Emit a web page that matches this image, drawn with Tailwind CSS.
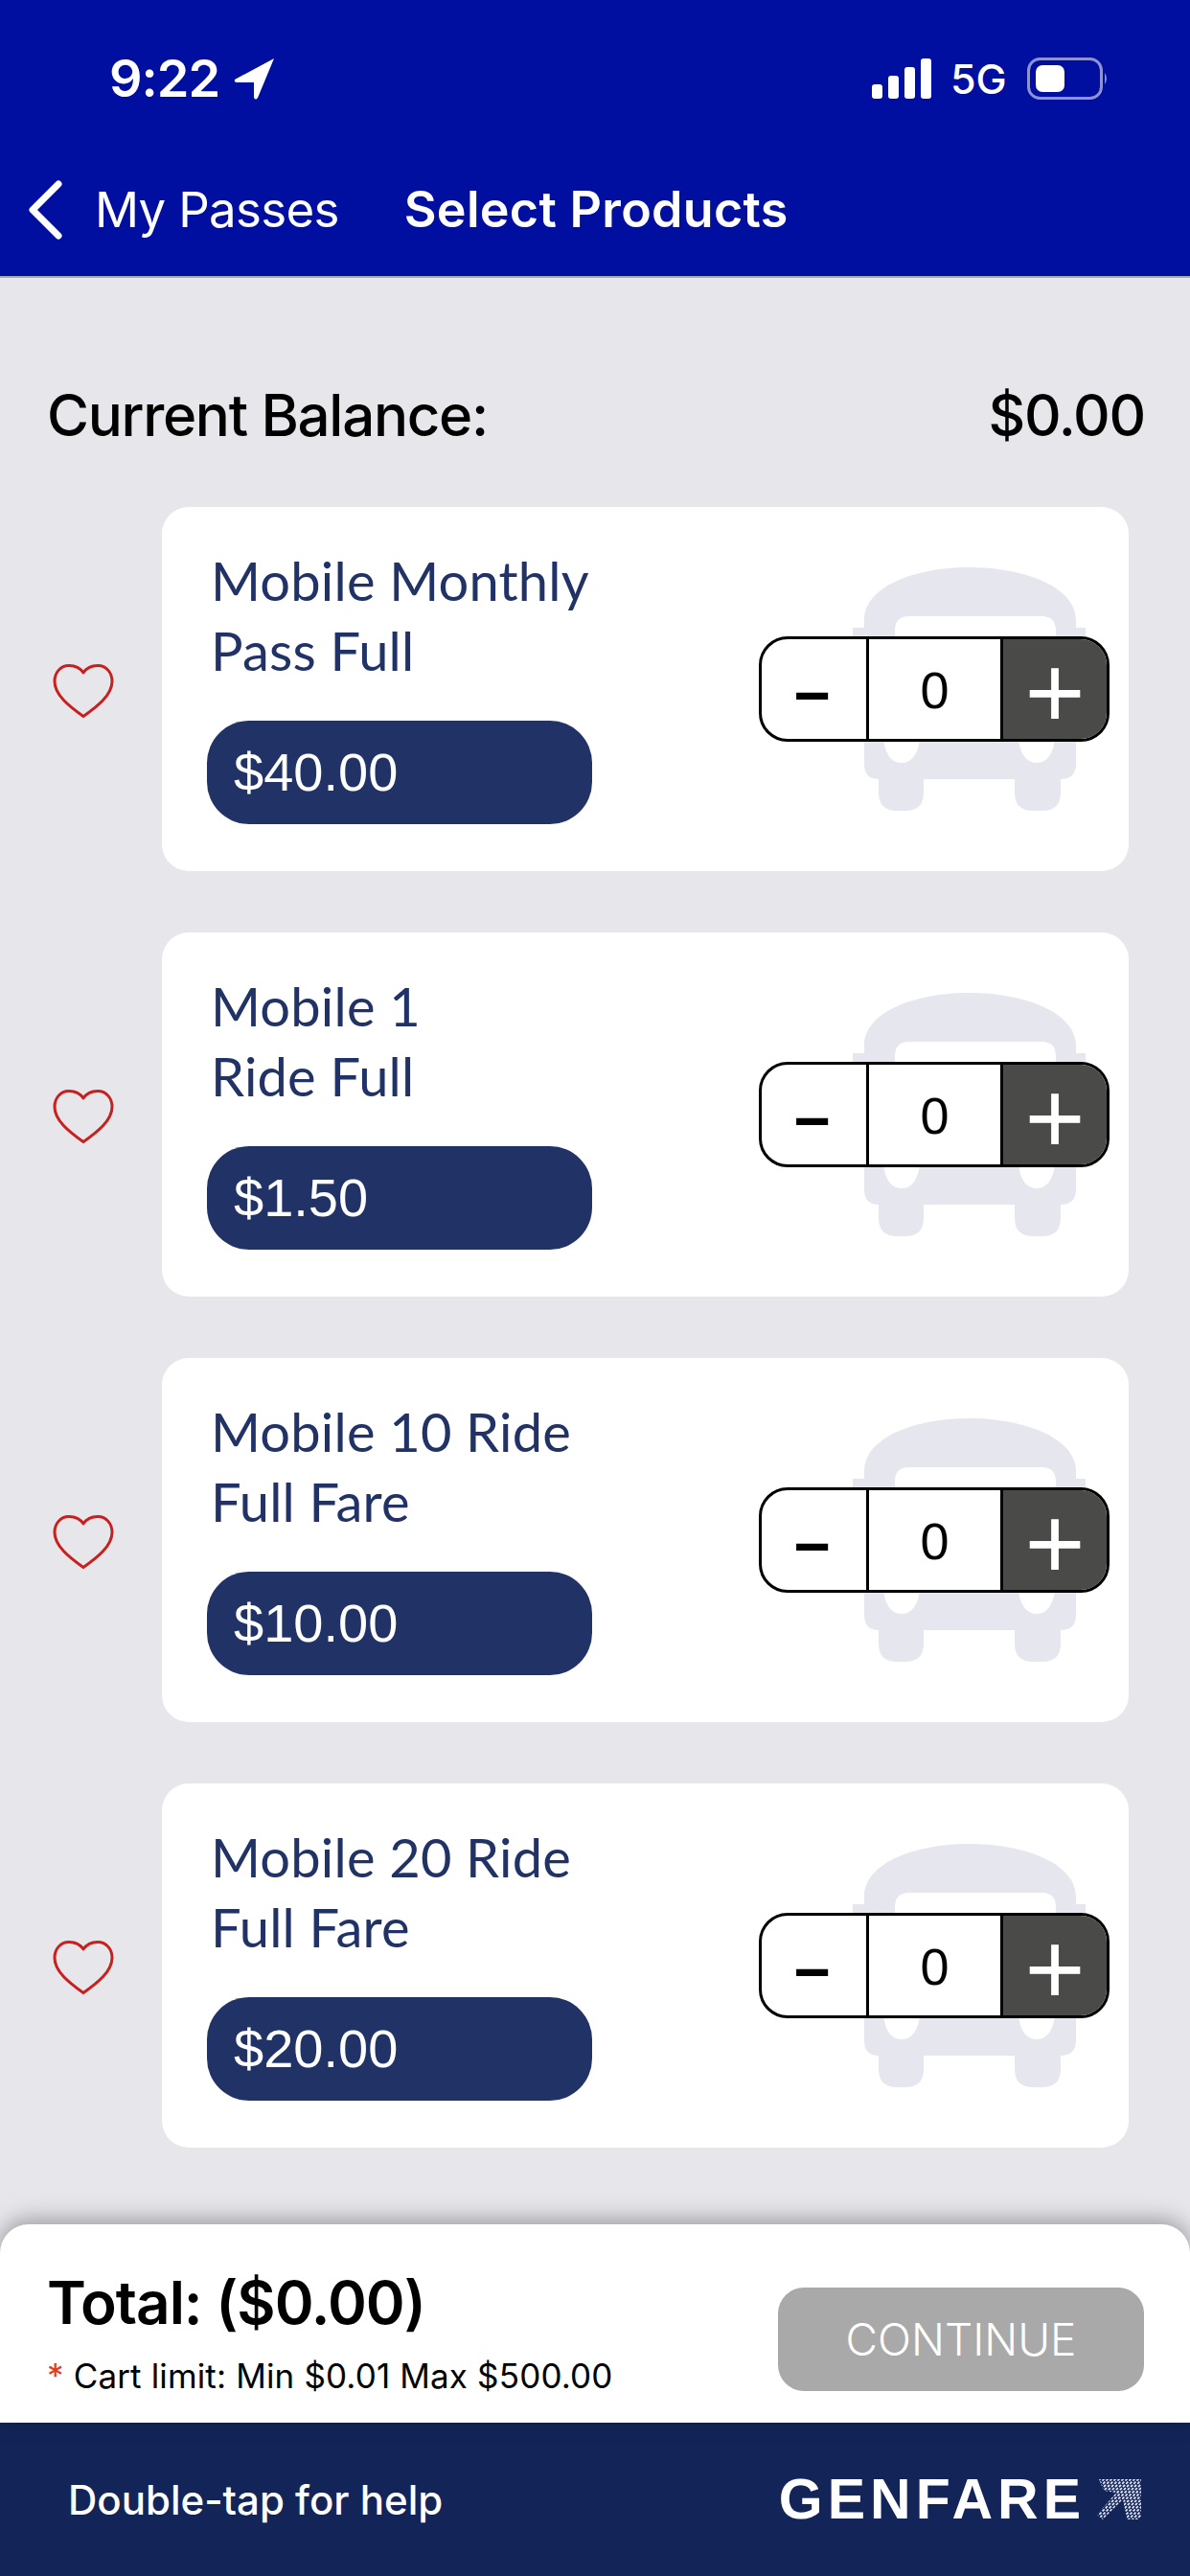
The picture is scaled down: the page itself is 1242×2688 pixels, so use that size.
<!DOCTYPE html>
<html><head><meta charset="utf-8"><script src="https://cdn.jsdelivr.net/npm/@tailwindcss/browser@4"></script></head>
<body class="m-0">
<div class="w-[1242px] h-[2688px] flex flex-col bg-[#e6e6eb] overflow-hidden font-['Inter','Liberation_Sans',sans-serif]">
  <header class="h-[290px] shrink-0 bg-[#000f9f] border-b-2 border-[#a9a9b4] text-white flex flex-col">
    <div class="h-[189px] shrink-0 flex items-start justify-between pt-[50px] pl-[114px] pr-[84px]">
      <div class="flex items-center gap-[15px] h-[64px]">
        <span class="text-[54px] font-semibold tracking-[-1px] leading-[64px]">9:22</span>
        <svg class="w-[44px] h-[44px]" viewBox="0 0 44 44"><path d="M42 1 L1 23 Q0 26 3 26 L21 26 L21 42 Q23 45 25 42 Z" fill="#fff"/></svg>
      </div>
      <div class="flex items-center h-[64px]">
        <svg class="w-[62px] h-[42px] mr-[20px]" viewBox="0 0 62 42"><rect x="0" y="27" width="11" height="15" rx="3" fill="#fff"/><rect x="17" y="18" width="11" height="24" rx="3" fill="#fff"/><rect x="34" y="9" width="11" height="33" rx="3" fill="#fff"/><rect x="51" y="0" width="11" height="42" rx="3" fill="#fff"/></svg>
        <span class="text-[43px] font-medium leading-[64px] w-[80px]">5G</span>
        <svg class="w-[86px] h-[44px]" viewBox="0 0 86 44"><rect x="1.500" y="1.500" width="76" height="41" rx="12" fill="none" stroke="#fff" stroke-opacity=".55" stroke-width="3"/><rect x="9" y="8" width="30" height="28" rx="7" fill="#fff"/><path d="M81 16 Q85 22 81 28 Z" fill="#fff" fill-opacity=".55"/></svg>
      </div>
    </div>
    <nav class="flex items-center h-[60px]">
      <svg class="w-[36px] h-[62px] ml-[29px]" viewBox="0 0 36 62"><path d="M32 4 L5 31 L32 58" fill="none" stroke="#fff" stroke-width="7" stroke-linecap="round" stroke-linejoin="round"/></svg>
      <span class="ml-[34px] text-[51px] font-normal tracking-[-0.7px] leading-[60px] whitespace-nowrap">My Passes</span>
      <span class="ml-[68px] text-[52px] font-semibold tracking-[0.3px] leading-[60px] whitespace-nowrap">Select Products</span>
    </nav>
  </header>

  <main class="flex-1 min-h-0 overflow-hidden pt-[98px]">
    <div class="flex items-center justify-between h-[90px] pl-[49px] pr-[47px] text-[60px] tracking-[-1.3px] text-black font-[450]">
      <span>Current Balance:</span><span>$0.00</span>
    </div>
    <div class="mt-[51px] flex flex-col gap-[64px]">

      <div class="flex items-center">
        <div class="w-[169px] shrink-0 flex justify-center pl-[5px] pt-[4px]"><svg class="w-[64px] h-[56px]" viewBox="0 0 64 56"><path d="M32 9 C28 3 22 1.500 17 1.500 C8 1.500 2 9 2 18 C2 32 17 44 32 54.500 C47 44 62 32 62 18 C62 9 56 1.500 47 1.500 C42 1.500 36 3 32 9 Z" fill="none" stroke="#c8201e" stroke-width="3" stroke-linejoin="round"/></svg></div>
        <div class="relative w-[1009px] h-[380px] bg-white rounded-[28px] flex items-center justify-between pl-[47px] pr-[20px]">
          <svg class="absolute left-[716px] top-[63px] w-[253px] h-[254px]" viewBox="0 0 253 254"><path fill="#e6e7ee" fill-rule="evenodd" d="M17 55 C17 20 70 0 126 0 C183 0 238 20 238 55 L238 63 L248 63 L248 85 L238 85 L238 205 Q238 221 222 221 L222 235 Q222 254 203 254 L193 254 Q174 254 174 235 L174 221 L79 221 L79 235 Q79 254 60 254 L51 254 Q32 254 32 235 L32 221 Q17 221 17 205 L17 85 L5 85 L5 63 L17 63 Z M64 51 Q49 51 49 66 L49 125 L217 125 L217 66 Q217 51 202 51 Z M56 150 C31 150 31 204 56 204 C81 204 81 150 56 150 Z M197 150 C172 150 172 204 197 204 C222 204 222 150 197 150 Z"/></svg>
          <div class="relative w-[402px]">
            <div class="pl-[4px] text-[#203266] text-[56px] tracking-[0.2px] leading-[73px] font-['Lato','Noto_Sans',sans-serif] mt-[-10px]">Mobile Monthly<br>Pass Full</div>
            <div class="mt-[37px] h-[108px] rounded-[44px] bg-[#203266] text-white flex items-center pl-[28px] text-[56px] font-['Liberation_Sans',sans-serif]">$40.00</div>
          </div>
          <div class="relative w-[366px] h-[110px] border-[3px] border-black rounded-[30px] flex bg-white font-['Liberation_Sans',sans-serif]">
            <div class="w-[109px] flex items-center justify-center text-black text-[66px] leading-[70px] font-bold pt-[12px] pr-[4px]">−</div>
            <div class="w-[143px] border-x-[3px] border-black flex items-center justify-center text-black text-[54px] pt-[2px]">0</div>
            <div class="w-[108px] bg-[#4a4a48] rounded-r-[27px] flex items-center justify-center text-white text-[108px] leading-[80px] pt-[6px]">+</div>
          </div>
        </div>
      </div>

      <div class="flex items-center">
        <div class="w-[169px] shrink-0 flex justify-center pl-[5px] pt-[4px]"><svg class="w-[64px] h-[56px]" viewBox="0 0 64 56"><path d="M32 9 C28 3 22 1.500 17 1.500 C8 1.500 2 9 2 18 C2 32 17 44 32 54.500 C47 44 62 32 62 18 C62 9 56 1.500 47 1.500 C42 1.500 36 3 32 9 Z" fill="none" stroke="#c8201e" stroke-width="3" stroke-linejoin="round"/></svg></div>
        <div class="relative w-[1009px] h-[380px] bg-white rounded-[28px] flex items-center justify-between pl-[47px] pr-[20px]">
          <svg class="absolute left-[716px] top-[63px] w-[253px] h-[254px]" viewBox="0 0 253 254"><path fill="#e6e7ee" fill-rule="evenodd" d="M17 55 C17 20 70 0 126 0 C183 0 238 20 238 55 L238 63 L248 63 L248 85 L238 85 L238 205 Q238 221 222 221 L222 235 Q222 254 203 254 L193 254 Q174 254 174 235 L174 221 L79 221 L79 235 Q79 254 60 254 L51 254 Q32 254 32 235 L32 221 Q17 221 17 205 L17 85 L5 85 L5 63 L17 63 Z M64 51 Q49 51 49 66 L49 125 L217 125 L217 66 Q217 51 202 51 Z M56 150 C31 150 31 204 56 204 C81 204 81 150 56 150 Z M197 150 C172 150 172 204 197 204 C222 204 222 150 197 150 Z"/></svg>
          <div class="relative w-[402px]">
            <div class="pl-[4px] text-[#203266] text-[56px] tracking-[0.2px] leading-[73px] font-['Lato','Noto_Sans',sans-serif] mt-[-10px]">Mobile 1<br>Ride Full</div>
            <div class="mt-[37px] h-[108px] rounded-[44px] bg-[#203266] text-white flex items-center pl-[28px] text-[56px] font-['Liberation_Sans',sans-serif]">$1.50</div>
          </div>
          <div class="relative w-[366px] h-[110px] border-[3px] border-black rounded-[30px] flex bg-white font-['Liberation_Sans',sans-serif]">
            <div class="w-[109px] flex items-center justify-center text-black text-[66px] leading-[70px] font-bold pt-[12px] pr-[4px]">−</div>
            <div class="w-[143px] border-x-[3px] border-black flex items-center justify-center text-black text-[54px] pt-[2px]">0</div>
            <div class="w-[108px] bg-[#4a4a48] rounded-r-[27px] flex items-center justify-center text-white text-[108px] leading-[80px] pt-[6px]">+</div>
          </div>
        </div>
      </div>

      <div class="flex items-center">
        <div class="w-[169px] shrink-0 flex justify-center pl-[5px] pt-[4px]"><svg class="w-[64px] h-[56px]" viewBox="0 0 64 56"><path d="M32 9 C28 3 22 1.500 17 1.500 C8 1.500 2 9 2 18 C2 32 17 44 32 54.500 C47 44 62 32 62 18 C62 9 56 1.500 47 1.500 C42 1.500 36 3 32 9 Z" fill="none" stroke="#c8201e" stroke-width="3" stroke-linejoin="round"/></svg></div>
        <div class="relative w-[1009px] h-[380px] bg-white rounded-[28px] flex items-center justify-between pl-[47px] pr-[20px]">
          <svg class="absolute left-[716px] top-[63px] w-[253px] h-[254px]" viewBox="0 0 253 254"><path fill="#e6e7ee" fill-rule="evenodd" d="M17 55 C17 20 70 0 126 0 C183 0 238 20 238 55 L238 63 L248 63 L248 85 L238 85 L238 205 Q238 221 222 221 L222 235 Q222 254 203 254 L193 254 Q174 254 174 235 L174 221 L79 221 L79 235 Q79 254 60 254 L51 254 Q32 254 32 235 L32 221 Q17 221 17 205 L17 85 L5 85 L5 63 L17 63 Z M64 51 Q49 51 49 66 L49 125 L217 125 L217 66 Q217 51 202 51 Z M56 150 C31 150 31 204 56 204 C81 204 81 150 56 150 Z M197 150 C172 150 172 204 197 204 C222 204 222 150 197 150 Z"/></svg>
          <div class="relative w-[402px]">
            <div class="pl-[4px] text-[#203266] text-[56px] tracking-[0.2px] leading-[73px] font-['Lato','Noto_Sans',sans-serif] mt-[-10px]">Mobile 10 Ride<br>Full Fare</div>
            <div class="mt-[37px] h-[108px] rounded-[44px] bg-[#203266] text-white flex items-center pl-[28px] text-[56px] font-['Liberation_Sans',sans-serif]">$10.00</div>
          </div>
          <div class="relative w-[366px] h-[110px] border-[3px] border-black rounded-[30px] flex bg-white font-['Liberation_Sans',sans-serif]">
            <div class="w-[109px] flex items-center justify-center text-black text-[66px] leading-[70px] font-bold pt-[12px] pr-[4px]">−</div>
            <div class="w-[143px] border-x-[3px] border-black flex items-center justify-center text-black text-[54px] pt-[2px]">0</div>
            <div class="w-[108px] bg-[#4a4a48] rounded-r-[27px] flex items-center justify-center text-white text-[108px] leading-[80px] pt-[6px]">+</div>
          </div>
        </div>
      </div>

      <div class="flex items-center">
        <div class="w-[169px] shrink-0 flex justify-center pl-[5px] pt-[4px]"><svg class="w-[64px] h-[56px]" viewBox="0 0 64 56"><path d="M32 9 C28 3 22 1.500 17 1.500 C8 1.500 2 9 2 18 C2 32 17 44 32 54.500 C47 44 62 32 62 18 C62 9 56 1.500 47 1.500 C42 1.500 36 3 32 9 Z" fill="none" stroke="#c8201e" stroke-width="3" stroke-linejoin="round"/></svg></div>
        <div class="relative w-[1009px] h-[380px] bg-white rounded-[28px] flex items-center justify-between pl-[47px] pr-[20px]">
          <svg class="absolute left-[716px] top-[63px] w-[253px] h-[254px]" viewBox="0 0 253 254"><path fill="#e6e7ee" fill-rule="evenodd" d="M17 55 C17 20 70 0 126 0 C183 0 238 20 238 55 L238 63 L248 63 L248 85 L238 85 L238 205 Q238 221 222 221 L222 235 Q222 254 203 254 L193 254 Q174 254 174 235 L174 221 L79 221 L79 235 Q79 254 60 254 L51 254 Q32 254 32 235 L32 221 Q17 221 17 205 L17 85 L5 85 L5 63 L17 63 Z M64 51 Q49 51 49 66 L49 125 L217 125 L217 66 Q217 51 202 51 Z M56 150 C31 150 31 204 56 204 C81 204 81 150 56 150 Z M197 150 C172 150 172 204 197 204 C222 204 222 150 197 150 Z"/></svg>
          <div class="relative w-[402px]">
            <div class="pl-[4px] text-[#203266] text-[56px] tracking-[0.2px] leading-[73px] font-['Lato','Noto_Sans',sans-serif] mt-[-10px]">Mobile 20 Ride<br>Full Fare</div>
            <div class="mt-[37px] h-[108px] rounded-[44px] bg-[#203266] text-white flex items-center pl-[28px] text-[56px] font-['Liberation_Sans',sans-serif]">$20.00</div>
          </div>
          <div class="relative w-[366px] h-[110px] border-[3px] border-black rounded-[30px] flex bg-white font-['Liberation_Sans',sans-serif]">
            <div class="w-[109px] flex items-center justify-center text-black text-[66px] leading-[70px] font-bold pt-[12px] pr-[4px]">−</div>
            <div class="w-[143px] border-x-[3px] border-black flex items-center justify-center text-black text-[54px] pt-[2px]">0</div>
            <div class="w-[108px] bg-[#4a4a48] rounded-r-[27px] flex items-center justify-center text-white text-[108px] leading-[80px] pt-[6px]">+</div>
          </div>
        </div>
      </div>

    </div>
  </main>

  <section class="relative h-[207px] shrink-0 bg-white rounded-t-[30px] shadow-[0_-4px_24px_rgba(0,0,0,0.35)] flex items-start justify-between pt-[46px] pl-[49px] pr-[48px]">
    <div class="flex flex-col text-black">
      <div class="text-[62px] font-semibold tracking-[-1px] leading-[72px]">Total: ($0.00)</div>
      <div class="text-[35px] tracking-[0.15px] leading-[44px] mt-[18px] whitespace-nowrap"><span class="text-[#e8391e]">*</span> Cart limit: Min $0.01 Max $500.00</div>
    </div>
    <button class="w-[382px] h-[108px] rounded-[27px] bg-[#a9a9a9] text-white text-[46px] font-light flex items-center justify-center mt-[20px]">CONTINUE</button>
  </section>

  <footer class="h-[160px] shrink-0 bg-[#132558] text-white flex items-center justify-between pl-[71px] pr-[51px]">
    <span class="text-[42px] font-medium">Double-tap for help</span>
    <div class="flex items-center gap-[12px]">
      <span class="text-[59px] font-bold leading-none tracking-[5px] font-['Liberation_Sans',sans-serif]">GENFARE</span>
      <svg class="w-[46px] h-[44px]" viewBox="0 0 46 44"><defs><clipPath id="gf"><path d="M2 1 L46 1 L46 43 L31 43 L27 22 L6 43 L0 38 L20 15 L7 13 Z"/></clipPath></defs><g clip-path="url(#gf)"><path fill="none" stroke="#e4e6ef" stroke-width="1.800" stroke-dasharray="3 1.500" d="M-40 44 L4 0 M-36 44 L8 0 M-32 44 L12 0 M-28 44 L16 0 M-24 44 L20 0 M-20 44 L24 0 M-16 44 L28 0 M-12 44 L32 0 M-8 44 L36 0 M-4 44 L40 0 M0 44 L44 0 M4 44 L48 0 M8 44 L52 0 M12 44 L56 0 M16 44 L60 0 M20 44 L64 0 M24 44 L68 0 M28 44 L72 0 M32 44 L76 0 M36 44 L80 0 M40 44 L84 0"/></g></svg>
    </div>
  </footer>
</div>
</body></html>
